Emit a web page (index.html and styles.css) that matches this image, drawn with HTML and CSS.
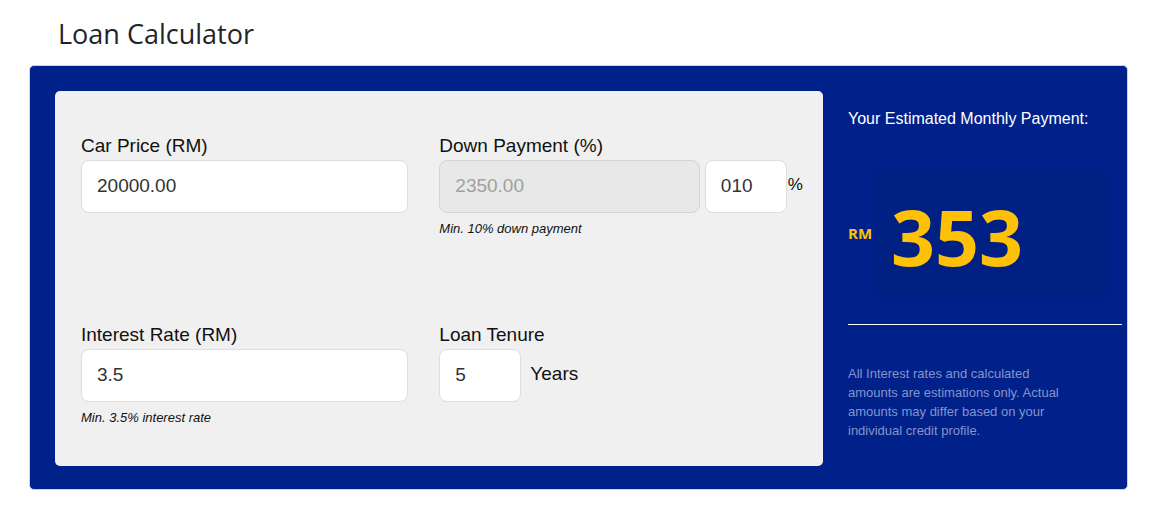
FILE: index.html
```html
<!DOCTYPE html>
<html lang="en">
<head>
<meta charset="utf-8">
<meta name="viewport" content="width=device-width, initial-scale=1">
<title>Loan Calculator</title>
<link rel="stylesheet" href="styles.css">
</head>
<body>
<main class="page">
  <h1 class="title">Loan Calculator</h1>
  <form class="card">
    <div class="panel">
      <div class="field">
        <label class="label" for="price">Car Price (RM)</label>
        <input class="input" id="price" type="text" value="20000.00">
      </div>
      <div class="field">
        <label class="label" for="down">Down Payment (%)</label>
        <div class="row">
          <input class="input" id="down" type="text" value="2350.00" disabled>
          <div class="unit unit-percent">
            <input class="input input-small" id="percent" type="text" value="010" aria-label="Down payment percentage">
            <span>%</span>
          </div>
        </div>
        <p class="hint">Min. 10% down payment</p>
      </div>
      <div class="field">
        <label class="label" for="rate">Interest Rate (RM)</label>
        <input class="input" id="rate" type="text" value="3.5">
        <p class="hint">Min. 3.5% interest rate</p>
      </div>
      <div class="field">
        <label class="label" for="tenure">Loan Tenure</label>
        <div class="unit unit-years">
          <input class="input input-small" id="tenure" type="text" value="5">
          <span>Years</span>
        </div>
      </div>
    </div>
    <div class="summary">
      <label class="summary-label" for="payment">Your Estimated Monthly Payment:</label>
      <div class="amount">
        <span class="currency">RM</span>
        <input class="payment" id="payment" type="text" value="353" readonly>
      </div>
      <hr class="rule">
      <p class="note">All Interest rates and calculated amounts are estimations only. Actual amounts may differ based on your individual credit profile.</p>
    </div>
  </form>
</main>
</body>
</html>
```

FILE: styles.css
```css
* {
  box-sizing: border-box;
}

body {
  margin: 0;
  background: #fff;
  color: #111;
  font-family: "Liberation Sans", Arial, sans-serif;
  font-size: 19px;
}

.page {
  padding: 14px 35px 24px 29px;
}

.title {
  margin: 0 0 11px;
  padding-left: 29px;
  color: #212529;
  font-family: "Open Sans", "Noto Sans", sans-serif;
  font-size: 27px;
  font-weight: 400;
  line-height: 40px;
}

.card {
  display: grid;
  grid-template-columns: minmax(0, 1fr) 304px;
  padding: 25px 0 23px 25px;
  border: 1px solid #ccd3e8;
  border-radius: 5px;
  background: #00218a;
}

.panel {
  display: grid;
  grid-template-columns: 9fr 10fr;
  align-content: start;
  gap: 85px 31px;
  padding: 43px 20px 39px 26px;
  border-radius: 5px;
  background: #f0f0f0;
}

.label {
  display: block;
  margin-bottom: 2px;
  line-height: 24px;
}

.input {
  display: block;
  width: 100%;
  min-width: 0;
  height: 53px;
  padding: 0 15px 2px;
  border: 1px solid #dedede;
  border-radius: 8px;
  background: #fff;
  color: #333;
  font: inherit;
}

.input:disabled {
  border-color: #d4d4d4;
  background: #e8e8e8;
  color: #a0a0a0;
}

.input-small {
  flex: none;
  width: 82px;
}

.row {
  display: flex;
  gap: 5px;
}

.unit {
  display: flex;
  align-items: center;
  gap: 1px;
  line-height: 22px;
}

.unit span {
  padding-bottom: 4px;
}

.unit-percent span {
  font-size: 17px;
}

.unit-years {
  gap: 9px;
}

.hint {
  margin: 7px 0 0;
  font-size: 13px;
  font-style: italic;
  line-height: 18px;
}

.summary {
  padding: 16px 5px 0 25px;
  color: #fff;
}

.summary-label {
  display: block;
  font-size: 16px;
  line-height: 24px;
}

.amount {
  display: flex;
  align-items: center;
  gap: 1px;
  margin-top: 39px;
  padding-right: 14px;
  color: #ffc107;
  font-family: "Open Sans", "Noto Sans", sans-serif;
  font-weight: 700;
}

.currency {
  padding-bottom: 4px;
  font-size: 15px;
}

.payment {
  flex: 1;
  min-width: 0;
  height: 130px;
  padding: 2px 18px 0;
  border: 0;
  border-radius: 8px;
  background: #002084;
  color: inherit;
  font: inherit;
  font-size: 77px;
}

.rule {
  margin: 24px 0 0;
  border: 0;
  border-top: 1px solid #fff;
}

.note {
  max-width: 220px;
  margin: 39px 0 0;
  color: #8494ca;
  font-size: 13px;
  line-height: 19px;
}
```
